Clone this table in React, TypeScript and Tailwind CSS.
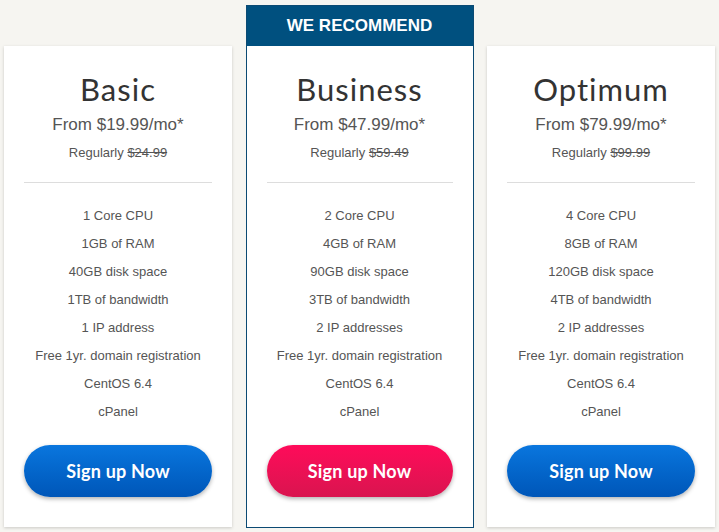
import React from 'react';

interface Plan {
  name: string;
  price: string;
  regular: string;
  features: string[];
  recommended?: boolean;
}

const plans: Plan[] = [
  {
    name: 'Basic',
    price: 'From $19.99/mo*',
    regular: '$24.99',
    features: ['1 Core CPU', '1GB of RAM', '40GB disk space', '1TB of bandwidth', '1 IP address', 'Free 1yr. domain registration', 'CentOS 6.4', 'cPanel'],
  },
  {
    name: 'Business',
    price: 'From $47.99/mo*',
    regular: '$59.49',
    features: ['2 Core CPU', '4GB of RAM', '90GB disk space', '3TB of bandwidth', '2 IP addresses', 'Free 1yr. domain registration', 'CentOS 6.4', 'cPanel'],
    recommended: true,
  },
  {
    name: 'Optimum',
    price: 'From $79.99/mo*',
    regular: '$99.99',
    features: ['4 Core CPU', '8GB of RAM', '120GB disk space', '4TB of bandwidth', '2 IP addresses', 'Free 1yr. domain registration', 'CentOS 6.4', 'cPanel'],
  },
];

const PlanBody: React.FC<{ plan: Plan }> = ({ plan }) => (
  <div className="flex flex-col items-center px-[20px] pt-[25px] pb-[30px] text-center">
    <h2 className="h-[36px] text-[31px] leading-[36px] tracking-[1px] text-[#333] font-['Lato',sans-serif] font-normal">{plan.name}</h2>
    <p className="mt-[6px] h-[24px] text-[17px] leading-[24px] text-[#555] font-['Liberation_Sans',Arial,sans-serif]">{plan.price}</p>
    <p className="mt-[6px] h-[20px] text-[13px] leading-[20px] text-[#555] font-['Liberation_Sans',Arial,sans-serif]">
      Regularly <span className="line-through">{plan.regular}</span>
    </p>
    <div className="mt-[19px] h-px w-full bg-[#dddddd]" />
    <ul className="mt-[19px] w-full">
      {plan.features.map(f => (
        <li key={f} className="h-[28px] text-[13px] leading-[28px] text-[#555] font-['Liberation_Sans',Arial,sans-serif]">
          {f}
        </li>
      ))}
    </ul>
    <button
      className={`mt-[19px] h-[52px] w-full rounded-full text-white text-[18px] font-bold tracking-[0.2px] font-['Lato',sans-serif] shadow-[0_2px_4px_rgba(0,0,0,0.3)] ${
        plan.recommended
          ? 'bg-gradient-to-b from-[#ff0a5a] to-[#d9144f]'
          : 'bg-gradient-to-b from-[#0a76de] to-[#0056b8]'
      }`}
    >
      Sign up Now
    </button>
  </div>
);

export default function App() {
  return (
    <div className="min-h-[532px] w-[719px] bg-[#f6f5f1]">
      <div className="flex items-start gap-[13.5px] pl-[4px] pt-[5px]">
        {plans.map(plan =>
          plan.recommended ? (
            <div key={plan.name} className="w-[228px] border border-[#0b4a73] bg-white">
              <div className="flex h-[40px] items-center justify-center bg-[#00507f] text-[17px] font-bold text-white font-['Liberation_Sans',Arial,sans-serif]">
                WE RECOMMEND
              </div>
              <PlanBody plan={plan} />
            </div>
          ) : (
            <div key={plan.name} className="mt-[41px] w-[228px] bg-white shadow-[0_1px_3px_rgba(0,0,0,0.18)]">
              <PlanBody plan={plan} />
            </div>
          )
        )}
      </div>
    </div>
  );
}
